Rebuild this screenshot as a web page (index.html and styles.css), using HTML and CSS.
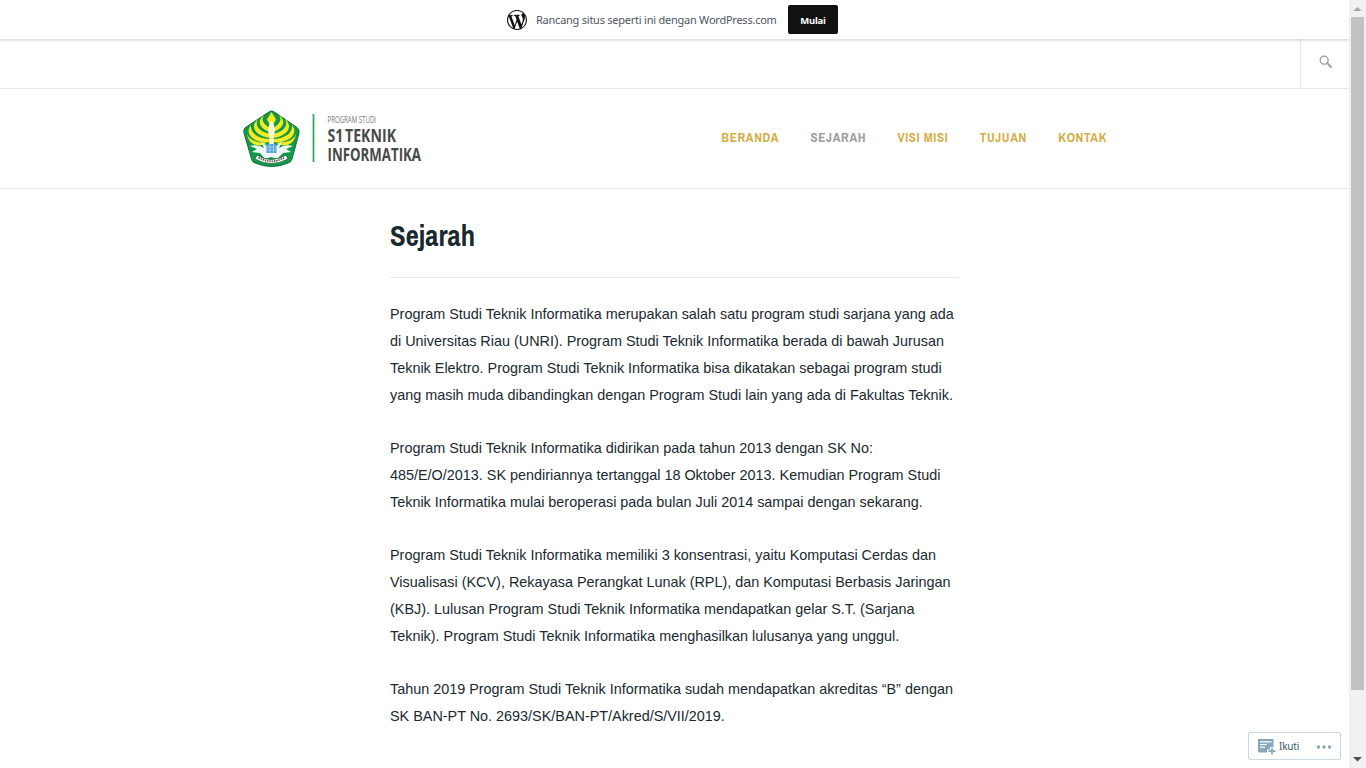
FILE: index.html
```html
<!DOCTYPE html>
<html lang="id">
<head>
<meta charset="utf-8">
<title>Sejarah</title>
<link rel="stylesheet" href="styles.css">
</head>
<body>
<div class="page">
  <div class="promo">
    <svg class="wp" viewBox="0 0 20 20"><path fill="#111" d="M20 10c0-5.51-4.49-10-10-10C4.48 0 0 4.49 0 10c0 5.52 4.48 10 10 10 5.51 0 10-4.48 10-10zM7.78 15.37L4.37 6.22c.55-.02 1.17-.08 1.17-.08.5-.06.44-1.13-.06-1.11 0 0-1.45.11-2.37.11-.18 0-.37 0-.58-.01C4.12 2.69 6.87 1.11 10 1.11c2.33 0 4.45.87 6.05 2.34-.68-.11-1.65.39-1.65 1.58 0 .74.45 1.36.9 2.1.35.61.55 1.36.55 2.46 0 1.49-1.4 5-1.4 5l-3.03-8.37c.54-.02.82-.17.82-.17.5-.05.44-1.25-.06-1.22 0 0-1.44.12-2.38.12-.87 0-2.33-.12-2.33-.12-.5-.03-.56 1.2-.06 1.22l.92.08 1.26 3.41zM17.41 10c.24-.64.74-1.87.43-4.25.7 1.29 1.05 2.71 1.05 4.25 0 3.29-1.73 6.24-4.4 7.78.97-2.59 1.94-5.2 2.92-7.78zM6.1 18.09C3.12 16.65 1.11 13.53 1.11 10c0-1.3.23-2.48.72-3.59C3.25 10.3 4.67 14.2 6.1 18.09zm4.03-6.63l2.58 6.98c-.86.29-1.76.45-2.71.45-.79 0-1.57-.11-2.29-.33.81-2.38 1.62-4.74 2.42-7.1z"/></svg>
    <span class="promo-text">Rancang situs seperti ini dengan WordPress.com</span>
    <a class="promo-btn">Mulai</a>
  </div>
  <div class="topbar">
    <div class="search">
      <svg width="14" height="14" viewBox="0 0 14 14" fill="none" stroke="#999"><circle cx="5.2" cy="5.2" r="4" stroke-width="1.3"/><path d="M8.2 8.2l4.3 4.3" stroke-width="1.9"/></svg>
    </div>
  </div>
  <header class="header">
    <svg class="logo" width="190" height="60" viewBox="0 0 190 60">
      <path d="M28 1Q30 1 32 2.500L54 17.500Q56.500 19.500 56 23L49 49Q48 52 45 53Q29 60 12 53Q9 52 8.500 49L1 23Q0 19.500 2.500 17.500L25 2.500Q27 1 28 1Z" fill="#139a49" stroke="#0a7236" stroke-width="1"/>
      <g fill="#f3ea20">
        <path d="M23 4C17 7 19 14 27 18V22C17 19 12 10 23 4ZM34 4C40 7 38 14 30 18V22C40 19 45 10 34 4Z"/>
        <path d="M15 9C11 16 17 22 27 24V28C13 26 6 17 15 9ZM42 9C46 16 40 22 30 24V28C44 26 51 17 42 9Z"/>
        <path d="M8 15C7 23 15 29 27 29V32C10 34 1 23 8 15ZM49 15C50 23 42 29 30 29V32C47 34 56 23 49 15Z"/>
        <path d="M4 24C7 31 15 33 24 32.500C17 38 6 36 4 24ZM53 24C50 31 42 33 33 32.500C40 38 51 36 53 24Z"/>
        <path d="M28.500 2L33 9.500L30.500 14H26.500L24 9.500Z"/>
      </g>
      <path d="M28.500 10Q34 18 30.500 28L31 36H26L26.500 28Q23 18 28.500 10Z" fill="#fffbd8"/>
      <path d="M7 36Q15 34 21 38L18 31L25 37H32L39 31L36 38Q42 34 50 36L43 39L48 42L40 43L34 49L28 47L22 49L17 43L9 42L14 39Z" fill="#eef8fb"/>
      <path d="M23.500 34H33.500V43H23.500Z" fill="#4d9fd3"/>
      <path d="M23.500 37H33.500M23.500 40H33.500M27 34V43M30.500 34V43" stroke="#b7def0" stroke-width=".8"/>
      <path d="M14 45Q28 54 43 45L45 49Q28 58 12 49Z" fill="#fff" stroke="#164a28" stroke-width=".7"/>
      <path d="M15.500 47.500Q28.500 55 41.500 47.500" fill="none" stroke="#555" stroke-width="1.600" stroke-dasharray="1.500 .8"/>
      <path d="M70.500 4V52" stroke="#2fa363" stroke-width="1.700"/>
      <g class="logo-text" fill="#484848">
        <text x="84.500" y="12.500" font-size="8.800" fill="#777" textLength="48.500" lengthAdjust="spacingAndGlyphs">PROGRAM STUDI</text>
        <text x="84.500" y="31.500" font-size="18" font-weight="700" word-spacing="-2.500" textLength="68.500" lengthAdjust="spacingAndGlyphs">S1 TEKNIK</text>
        <text x="84.500" y="50.500" font-size="18" font-weight="700" textLength="93.500" lengthAdjust="spacingAndGlyphs">INFORMATIKA</text>
      </g>
    </svg>
    <nav class="nav"><a>BERANDA</a><a class="current">SEJARAH</a><a>VISI MISI</a><a>TUJUAN</a><a>KONTAK</a></nav>
  </header>
  <main class="content">
    <h1>Sejarah</h1>
    <p>Program Studi Teknik Informatika merupakan salah satu program studi sarjana yang ada<br>di Universitas Riau (UNRI). Program Studi Teknik Informatika berada di bawah Jurusan<br>Teknik Elektro. Program Studi Teknik Informatika bisa dikatakan sebagai program studi<br>yang masih muda dibandingkan dengan Program Studi lain yang ada di Fakultas Teknik.</p>
    <p>Program Studi Teknik Informatika didirikan pada tahun 2013 dengan SK No:<br>485/E/O/2013. SK pendiriannya tertanggal 18 Oktober 2013. Kemudian Program Studi<br>Teknik Informatika mulai beroperasi pada bulan Juli 2014 sampai dengan sekarang.</p>
    <p>Program Studi Teknik Informatika memiliki 3 konsentrasi, yaitu Komputasi Cerdas dan<br>Visualisasi (KCV), Rekayasa Perangkat Lunak (RPL), dan Komputasi Berbasis Jaringan<br>(KBJ). Lulusan Program Studi Teknik Informatika mendapatkan gelar S.T. (Sarjana<br>Teknik). Program Studi Teknik Informatika menghasilkan lulusanya yang unggul.</p>
    <p>Tahun 2019 Program Studi Teknik Informatika sudah mendapatkan akreditas “B” dengan<br>SK BAN-PT No. 2693/SK/BAN-PT/Akred/S/VII/2019.</p>
  </main>
</div>
<div class="scrollbar">
  <svg width="17" height="17"><path d="M4.500 11L8.500 7L12.500 11Z" fill="#a3a3a3"/></svg>
  <div class="thumb"></div>
  <svg width="17" height="17"><path d="M4 6L8.500 10.500L13 6Z" fill="#505050"/></svg>
</div>
<div class="follow">
  <svg width="18" height="17" viewBox="0 0 18 17"><path d="M0 1H15.500V9H12V11.500H9V14.500H1.500Q0 14.500 0 13Z" fill="#87a6bc"/><path d="M2 3.800H13.500M2 6.500H9M2 9.200H7" stroke="#fff" stroke-width="1.200"/><path d="M14 9.800V16.500M10.500 13.200H17.500" stroke="#87a6bc" stroke-width="1.700"/></svg>
  <span>Ikuti</span>
  <svg class="dots" width="16" height="4" fill="#87a6bc"><circle cx="2.500" cy="2" r="1.700"/><circle cx="8" cy="2" r="1.700"/><circle cx="13.500" cy="2" r="1.700"/></svg>
</div>
</body>
</html>
```
FILE: styles.css
```css
* { box-sizing: border-box; }
body { margin: 0; height: 768px; overflow: hidden; display: flex; background: #fff; font-family: "Liberation Sans", Arial, sans-serif; color: #192930; }
.page { width: 1349px; overflow: hidden; }
.promo { position: relative; height: 39px; display: flex; align-items: center; padding-left: 507px; box-shadow: 0 1px 2px 1px rgba(0,0,0,.13); }
.wp { width: 20px; height: 20px; margin-right: 9px; }
.promo-text { width: 239px; margin-top: -1px; font: 11px "Noto Sans", sans-serif; letter-spacing: -.24px; color: #50575e; white-space: nowrap; }
.promo-btn { margin-left: 13px; width: 50px; height: 29px; border-radius: 2px; background: #111; color: #fff; font: 700 9.500px/31px "Noto Sans", sans-serif; letter-spacing: -.2px; text-align: center; }
.topbar { height: 50px; border-bottom: 1px solid #e8e8e8; display: flex; justify-content: flex-end; }
.search { width: 49px; border-left: 1px solid #e8e8e8; padding: 16px 0 0 17.500px; }
.search svg { display: block; }
.header { height: 100px; border-bottom: 1px solid #e8e8e8; display: flex; align-items: flex-start; padding: 21px 242px 0 243px; justify-content: space-between; }
.logo { display: block; overflow: visible; }
.logo-text { font-family: "Open Sans", "Noto Sans", sans-serif; }
.nav { display: flex; gap: 31.400px; padding-top: 20px; font: 700 13px/16px "Liberation Sans Narrow", "Archivo Narrow", "Liberation Sans", sans-serif; letter-spacing: .65px; color: #d4ae45; white-space: nowrap; }
.nav .current { color: #9c9c9c; }
.content { width: 569px; margin-left: 390px; padding-top: 27px; }
h1 { margin: 0 0 23px; height: 62px; border-bottom: 1px solid #e8e8e8; font: 700 28.700px/40px "Liberation Sans Narrow", "Archivo Narrow", "Liberation Sans", sans-serif; }
p { margin: 0 0 26px; font-size: 14.400px; line-height: 27px; white-space: nowrap; }
.scrollbar { width: 17px; height: 768px; background: #f1f1f1; display: flex; flex-direction: column; }
.scrollbar svg { display: block; }
.thumb { width: 13px; height: 673px; margin: 0 2px 61px; background: #c1c1c1; }
.follow { position: fixed; left: 1248px; top: 732px; width: 93px; height: 28px; border: 1px solid #c8d7e1; border-radius: 2px; background: #fff; display: flex; align-items: center; padding-left: 9px; font: 10px "Noto Sans", sans-serif; letter-spacing: -.2px; color: #3d596d; }
.follow span { width: 20px; margin-left: 3px; }
.dots { margin: 2px 0 0 17px; }
```
